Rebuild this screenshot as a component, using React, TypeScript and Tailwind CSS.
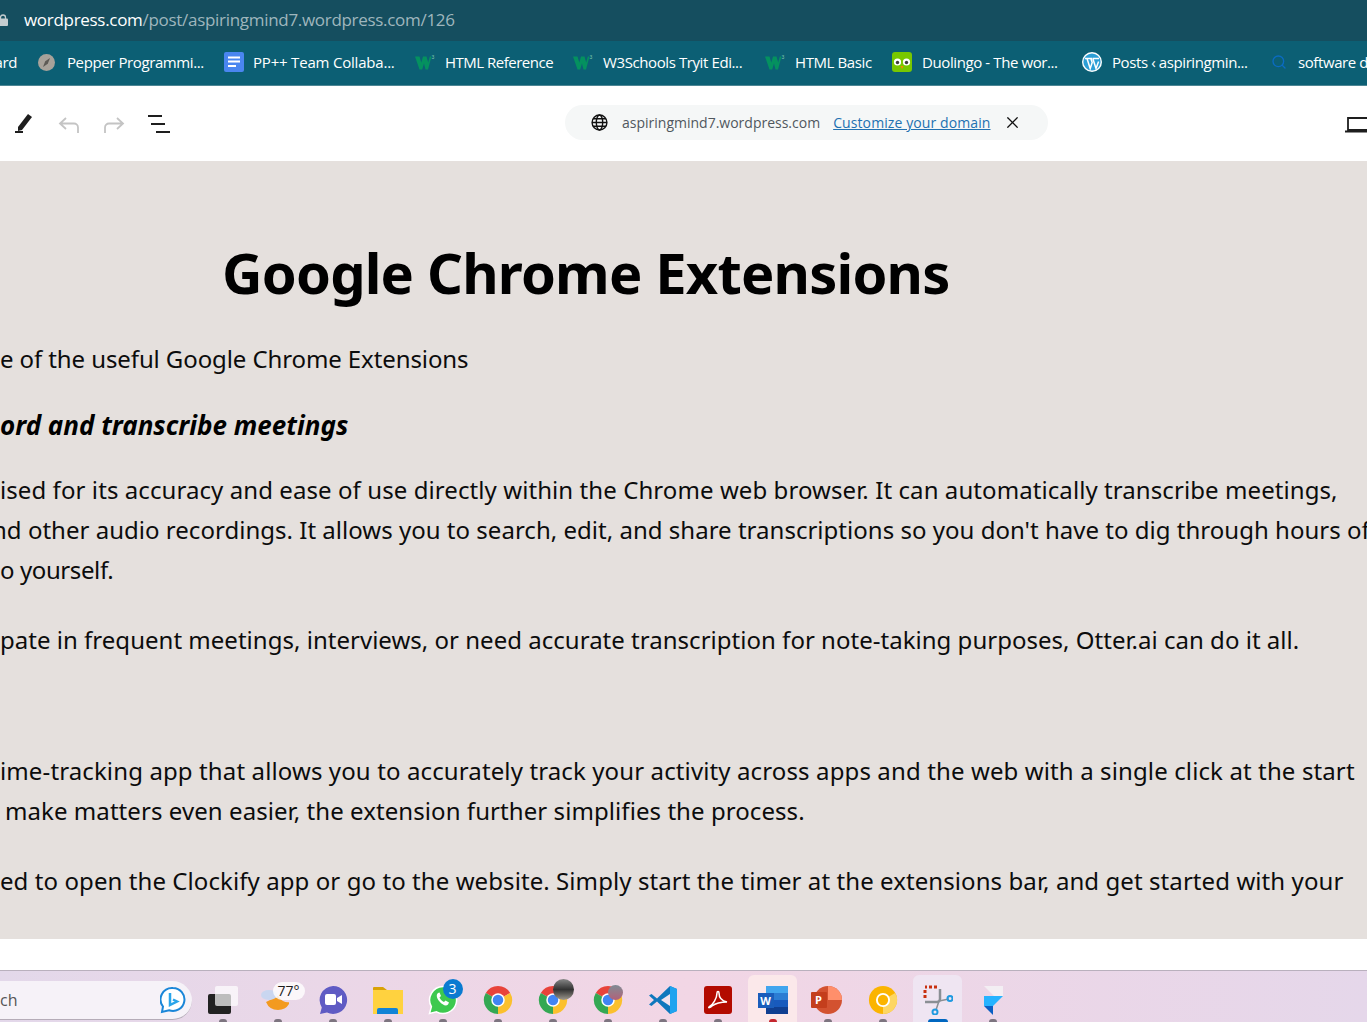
import { X, Search } from "lucide-react"

const uiFont = "font-['Open_Sans',sans-serif]"

const W3Icon = () => (
  <svg width="20" height="16" viewBox="0 0 20 16">
    <path d="M0 2.500h4.500l1.800 6 1.700-6h3.500l1.700 6 1.600-6h1.700L13 15.500h-2.500L9 9.500l-1.800 6H4.500z" fill="#04915f" />
    <text x="16.500" y="4.500" fontSize="5" fill="#7fc9ad" fontFamily="Liberation Sans">3</text>
  </svg>
)

const DocsIcon = () => (
  <svg width="20" height="20" viewBox="0 0 20 20">
    <rect width="20" height="20" rx="2" fill="#4a86f0" />
    <path d="M4 4.500h12v2H4zM4 8.500h12v2H4zM4 13h8v2H4z" fill="#fff" />
  </svg>
)

const CompassIcon = () => (
  <svg width="17" height="17" viewBox="0 0 17 17">
    <circle cx="8.500" cy="8.500" r="8.500" fill="#a8a29a" />
    <path d="M12 4 9.800 9.800 5 13l2.200-5.800z" fill="#5d5a55" />
  </svg>
)

const DuoIcon = () => (
  <svg width="20" height="20" viewBox="0 0 20 20">
    <rect width="20" height="20" rx="3" fill="#78c800" />
    <circle cx="5.500" cy="10" r="3.600" fill="#fff" />
    <circle cx="14.500" cy="10" r="3.600" fill="#fff" />
    <circle cx="5.500" cy="10.500" r="1.700" fill="#3c3c3c" />
    <circle cx="14.500" cy="10.500" r="1.700" fill="#3c3c3c" />
    <path d="M8.500 14h3L10 17z" fill="#f49000" />
  </svg>
)

const WpIcon = () => (
  <svg width="20" height="20" viewBox="0 0 20 20">
    <circle cx="10" cy="10" r="10" fill="#fff" />
    <circle cx="10" cy="10" r="8.600" fill="#2c9fd6" />
    <path d="M3 6.500h7M10.500 6.500h6.500M5 6.500l3.200 10 2-6-1.400-4M10.800 6.500l3.200 10 2.600-7" fill="none" stroke="#fff" strokeWidth="1.500" />
  </svg>
)

const bookmarks = [
  { icon: <CompassIcon />, label: "Pepper Programmi...", iconBox: "w-[17px] ml-[21px]", textBox: "ml-[12px] w-[136px]" },
  { icon: <DocsIcon />, label: "PP++ Team Collaba...", iconBox: "w-[20px] ml-[21px]", textBox: "ml-[9px] w-[142px] tracking-[-0.2px]" },
  { icon: <W3Icon />, label: "HTML Reference", iconBox: "w-[20px] ml-[20px]", textBox: "ml-[10px] w-[107px] tracking-[-0.5px]" },
  { icon: <W3Icon />, label: "W3Schools Tryit Edi...", iconBox: "w-[20px] ml-[21px]", textBox: "ml-[10px] w-[141px]" },
  { icon: <W3Icon />, label: "HTML Basic", iconBox: "w-[20px] ml-[21px]", textBox: "ml-[10px] w-[77px]" },
  { icon: <DuoIcon />, label: "Duolingo - The wor...", iconBox: "w-[20px] ml-[20px]", textBox: "ml-[10px] w-[140px]" },
  { icon: <WpIcon />, label: "Posts ‹ aspiringmin...", iconBox: "w-[20px] ml-[20px]", textBox: "ml-[10px] w-[137px]" },
  { icon: <Search size={16} className="text-[#0b6bc2]" />, label: "software d", iconBox: "w-[16px] ml-[22px]", textBox: "ml-[11px] w-[80px]" },
]

const ChromeIcon = ({ children }: { children?: React.ReactNode }) => (
  <div className="relative w-[30px] h-[30px]">
    <svg width="30" height="30" viewBox="0 0 32 32">
      <path d="M3 8.500A15 15 0 0 1 29 8.500L16 16Z" fill="#e8433a" />
      <path d="M29 8.500A15 15 0 0 1 16 31L16 16Z" fill="#fbc02d" />
      <path d="M16 31A15 15 0 0 1 3 8.500L16 16Z" fill="#34a853" />
      <circle cx="16" cy="16" r="7.200" fill="#fff" />
      <circle cx="16" cy="16" r="5.600" fill="#4285f4" />
    </svg>
    {children}
  </div>
)

const taskIcons = [
  {
    key: "taskview",
    node: (
      <div className="relative w-[30px] h-[28px]">
        <div className="absolute left-0 bottom-0 w-[23px] h-[20px] bg-[#222] rounded-[2px]" />
        <div className="absolute right-0 top-0 w-[23px] h-[20px] bg-white/70 rounded-[2px]" />
      </div>
    ),
  },
  {
    key: "weather",
    node: (
      <div className="relative w-[40px] h-[32px]">
        <svg width="28" height="30" viewBox="0 0 28 30" className="absolute left-[3px] top-[2px]">
          <path d="M7 18a13 13 0 0 0 24 0 11 11 0 0 1-12-6z" fill="#f39a1f" transform="translate(-2 -2)" />
          <ellipse cx="8" cy="9" rx="8" ry="5" fill="#c9d6f0" />
        </svg>
        <span className="absolute left-[15px] top-[-2px] px-[5px] rounded-full bg-white/80 text-[14px] leading-[18px] text-[#1c1c1c] font-['Open_Sans',sans-serif]">77°</span>
      </div>
    ),
  },
  {
    key: "meet",
    node: (
      <svg width="30" height="30" viewBox="0 0 30 30">
        <path d="M15 1a14 14 0 1 1-6 26.600L2 29l1.800-6.500A14 14 0 0 1 15 1z" fill="#5f5bc4" />
        <rect x="7" y="9" width="11" height="11" rx="2" fill="#fff" />
        <path d="m19 13 5-3v9l-5-3z" fill="#fff" />
      </svg>
    ),
  },
  {
    key: "folder",
    node: (
      <svg width="32" height="28" viewBox="0 0 32 28">
        <path d="M1 2a1 1 0 0 1 1-1h9l4 3h16v3H1z" fill="#d9a206" />
        <rect x="1" y="4" width="30" height="24" fill="#ffd23f" />
        <path d="M5 28v-4a2 2 0 0 1 2-2h17a2 2 0 0 1 2 2v4z" fill="#1183d6" />
      </svg>
    ),
  },
  {
    key: "whatsapp",
    node: (
      <div className="relative w-[30px] h-[30px]">
        <svg width="30" height="30" viewBox="0 0 30 30">
          <path d="M15 1.500a13.500 13.500 0 1 1-6.500 25.300L1.500 28.500l1.900-6.800A13.500 13.500 0 0 1 15 1.500z" fill="#3dc94f" stroke="#fff" strokeWidth="1.500" />
          <path d="M10 8c-2 1.500-1.500 5 1.500 8.500s6.500 5 8.500 3l1-2-3.500-2-1.500 1.500c-2-1-3.500-2.500-4.500-4.500l1.500-1.500-1.500-3.500z" fill="#fff" />
        </svg>
        <span className="absolute right-[-5px] top-[-6px] w-[20px] h-[20px] rounded-full bg-[#0a7bd1] text-white text-[14px] leading-[20px] text-center font-['Open_Sans',sans-serif]">3</span>
      </div>
    ),
  },
  { key: "chrome1", node: <ChromeIcon /> },
  {
    key: "chrome2",
    node: (
      <ChromeIcon>
        <div className="absolute right-[-6px] top-[-6px] w-[21px] h-[21px] rounded-full bg-gradient-to-b from-[#888] via-[#333] to-[#a09a90]" />
      </ChromeIcon>
    ),
  },
  {
    key: "chrome3",
    node: (
      <ChromeIcon>
        <div className="absolute right-0 top-0 w-[15px] h-[15px] rounded-full bg-gradient-to-b from-[#7d8a94] to-[#b0607a]" />
      </ChromeIcon>
    ),
  },
  {
    key: "vscode",
    node: (
      <svg width="30" height="30" viewBox="0 0 30 30">
        <path d="M22 1 29 4v22l-7 3L9 16.500 3.500 21 1 19.500 6 15 1 10.500 3.500 9 9 13.500z" fill="#0e78bd" />
        <path d="M22 1 29 4v22l-7 3z" fill="#1fa3ef" />
        <path d="M22 9 13 15l9 6z" fill="#f0e3ee" />
      </svg>
    ),
  },
  {
    key: "acrobat",
    node: (
      <svg width="28" height="28" viewBox="0 0 28 28">
        <rect width="28" height="28" rx="3" fill="#b30b00" />
        <path d="M5 21c4-2 8-9 8-14 0-2 2-2 2 0 0 5 3 8 8 9-5 0-11 1-15 4-2 2-4 2-3 1z" fill="none" stroke="#fff" strokeWidth="1.500" />
      </svg>
    ),
  },
  {
    key: "word",
    active: "bg-[#fbe8ea]",
    bar: "bg-[#c4262e] w-[8px]",
    node: (
      <div className="relative w-[30px] h-[28px]">
        <div className="absolute right-0 top-0 w-[22px] h-full flex flex-col">
          <div className="flex-1 bg-[#41a5ee]" />
          <div className="flex-1 bg-[#2b7cd3]" />
          <div className="flex-1 bg-[#185abd]" />
          <div className="flex-1 bg-[#103f91]" />
        </div>
        <div className="absolute left-0 top-[7px] w-[16px] h-[15px] bg-[#1a5dbb] text-white text-[11px] leading-[15px] text-center font-bold font-['Open_Sans',sans-serif]">W</div>
      </div>
    ),
  },
  {
    key: "ppt",
    node: (
      <div className="relative w-[30px] h-[30px]">
        <svg width="30" height="30" viewBox="0 0 30 30">
          <circle cx="15" cy="15" r="14" fill="#d35230" />
          <path d="M15 1a14 14 0 0 1 14 14H15z" fill="#ff8f6b" />
        </svg>
        <div className="absolute left-[-2px] top-[7px] w-[16px] h-[16px] bg-[#c43e1c] rounded-[1px] text-white text-[11px] leading-[16px] text-center font-bold font-['Open_Sans',sans-serif]">P</div>
      </div>
    ),
  },
  {
    key: "canary",
    node: (
      <svg width="30" height="30" viewBox="0 0 32 32">
        <circle cx="16" cy="16" r="15" fill="#fbb400" />
        <path d="M29 8.500A15 15 0 0 1 16 31L16 16Z" fill="#fdd663" />
        <circle cx="16" cy="16" r="7.500" fill="#fff" />
        <circle cx="16" cy="16" r="5.500" fill="#fbb400" />
      </svg>
    ),
  },
  {
    key: "snip",
    active: "bg-[#efe5f2]",
    bar: "bg-[#0067c0] w-[20px]",
    node: (
      <svg width="30" height="30" viewBox="0 0 30 30">
        <path d="M2 2h2M6 2h3M11 2h3M2 5v3M2 10v3" stroke="#c8300f" strokeWidth="3" fill="none" />
        <path d="M2 16h12a3 3 0 0 0 3-3V3" stroke="#8a8f94" strokeWidth="2.500" fill="none" transform="translate(0 1)" />
        <path d="M16 16 26 14M16 16l-3 9" stroke="#8a8f94" strokeWidth="1.500" />
        <circle cx="27" cy="13.500" r="2.500" fill="none" stroke="#1f9ae0" strokeWidth="2" />
        <circle cx="12" cy="27" r="2.500" fill="none" stroke="#1f9ae0" strokeWidth="2" />
      </svg>
    ),
  },
  {
    key: "framer",
    node: (
      <svg width="20" height="30" viewBox="0 0 20 30">
        <path d="M1 1h19v10H11z" fill="#f3eef3" />
        <path d="M11 11h9L10 21H1V11z" fill="#26b3ff" />
        <path d="M1 21h9v9z" fill="#0a5fc4" />
      </svg>
    ),
  },
]

const Line = ({ children, className = "" }: { children: React.ReactNode; className?: string }) => (
  <p className={`h-[40px] leading-[40px] text-[24px] text-[#0c0c0c] whitespace-nowrap ${className}`}>{children}</p>
)

export default function App() {
  return (
    <div className="w-[1367px] h-[1022px] overflow-hidden flex flex-col bg-white">
      {/* Address bar */}
      <div className={`h-[41px] pb-[2px] bg-[#154e5f] flex items-center ${uiFont} text-[17px] tracking-[-0.3px]`}>
        <svg width="10" height="12" viewBox="0 0 10 12" className="-ml-[2px] mr-[16px] shrink-0">
          <rect x="0" y="4.500" width="10" height="7.500" rx="1" fill="#c5cdd0" />
          <path d="M2.500 5V3.500a2.500 2.500 0 0 1 5 0V5" fill="none" stroke="#c5cdd0" strokeWidth="1.300" />
        </svg>
        <span className="text-white">wordpress.com</span>
        <span className="text-[#9fb6bd]">/post/aspiringmind7.wordpress.com/126</span>
      </div>

      {/* Bookmarks */}
      <div className={`h-[45px] pb-[2px] bg-[#0c5f74] border-b border-[#4d8694] flex items-center text-white text-[15px] tracking-[-0.4px] whitespace-nowrap ${uiFont}`}>
        <span className="w-[17px] shrink-0 overflow-hidden flex justify-end">ard</span>
        {bookmarks.map((b) => (
          <div key={b.label} className="flex items-center shrink-0">
            <div className={`flex justify-center shrink-0 ${b.iconBox}`}>{b.icon}</div>
            <span className={`shrink-0 ${b.textBox}`}>{b.label}</span>
          </div>
        ))}
      </div>

      {/* Editor toolbar */}
      <div className="h-[75px] flex items-center relative">
        <svg width="20" height="22" viewBox="0 0 20 22" className="ml-[15px] -mt-[1px] shrink-0">
          <path d="M3 15 13 2l4 3-10 13-4 1z" fill="#1e1e1e" />
          <rect x="0" y="19" width="8" height="2" fill="#1e1e1e" />
        </svg>
        <svg width="22" height="16" viewBox="0 0 22 16" className="ml-[23px] mt-[2px] shrink-0" fill="none" stroke="#c4c4c4" strokeWidth="1.800">
          <path d="M8 1 2 6.500 8 12M2 6.500h14a4 4 0 0 1 4 4V16" />
        </svg>
        <svg width="22" height="16" viewBox="0 0 22 16" className="ml-[23px] mt-[2px] shrink-0" fill="none" stroke="#c4c4c4" strokeWidth="1.800">
          <path d="m14 1 6 5.500L14 12M20 6.500H6a4 4 0 0 0-4 4V16" />
        </svg>
        <svg width="24" height="18" viewBox="0 0 24 18" className="ml-[23px] shrink-0" fill="#1e1e1e">
          <rect x="0" y="0" width="14" height="2" />
          <rect x="3" y="8" width="14" height="2" />
          <rect x="8" y="16" width="14" height="2" />
        </svg>

        <div className={`ml-[393px] -mt-[2px] w-[483px] shrink-0 h-[35px] rounded-full bg-[#f5f7f7] flex items-center text-[14px] ${uiFont}`}>
          <svg width="17" height="17" viewBox="0 0 16 16" className="ml-[26px]" fill="none" stroke="#111" strokeWidth="1.300">
            <circle cx="8" cy="8" r="7" />
            <ellipse cx="8" cy="8" rx="3" ry="7" />
            <path d="M1 8h14M2 4.500h12M2 11.500h12" />
          </svg>
          <span className="ml-[14px] text-[#50575e]">aspiringmind7.wordpress.com</span>
          <span className="ml-[13px] text-[#2271b1] underline tracking-[0.1px]">Customize your domain</span>
          <X size={19} strokeWidth={1.500} className="ml-[12px] text-[#111]" />
        </div>

        <svg width="24" height="16" viewBox="0 0 24 16" className="ml-[297px] mt-[2px] shrink-0" fill="none" stroke="#1e1e1e" strokeWidth="1.800">
          <path d="M3 1h20v12H3zM0 14.500h24" />
        </svg>
      </div>

      {/* Post content */}
      <div className="h-[778px] bg-[#e5e0dd] overflow-hidden font-['Noto_Sans',sans-serif]">
        <h1 className="pl-[222px] pt-[81px] mb-[37px] leading-[60px] text-[56px] font-bold text-black whitespace-nowrap tracking-[-0.8px]">
          Google Chrome Extensions
        </h1>
        <Line className="tracking-[-0.1px]">e of the useful Google Chrome Extensions</Line>
        <Line className="mt-[26px] !text-[26px] font-bold italic !text-black">ord and transcribe meetings</Line>
        <Line className="mt-[25px] tracking-[0.08px]">ised for its accuracy and ease of use directly within the Chrome web browser. It can automatically transcribe meetings,</Line>
        <Line className="-ml-[8px] tracking-[0.02px]">nd other audio recordings. It allows you to search, edit, and share transcriptions so you don't have to dig through hours of</Line>
        <Line className="tracking-[-0.4px]">o yourself.</Line>
        <Line className="mt-[30px] tracking-[0.02px]">pate in frequent meetings, interviews, or need accurate transcription for note-taking purposes, Otter.ai can do it all.</Line>
        <Line className="mt-[91px] tracking-[0.12px]">ime-tracking app that allows you to accurately track your activity across apps and the web with a single click at the start</Line>
        <Line className="pl-[5px] tracking-[0.07px]">make matters even easier, the extension further simplifies the process.</Line>
        <Line className="mt-[30px] tracking-[0.08px]">ed to open the Clockify app or go to the website. Simply start the timer at the extensions bar, and get started with your</Line>
      </div>

      <div className="h-[31px] bg-white" />

      {/* Taskbar */}
      <div className="h-[52px] border-t border-[#b9b0bd] bg-gradient-to-r from-[#e3d8ea] via-[#f2d6e5] to-[#e5d7ea] flex">
        <div className={`mt-[10px] w-[192px] h-[39px] rounded-r-full bg-[#f6f2f8] border-b border-[#b5acb8] flex items-center justify-between pr-[6px] shrink-0 ${uiFont}`}>
          <span className="text-[16px] text-[#555]">ch</span>
          <svg width="26" height="28" viewBox="0 0 26 28" fill="none">
            <path d="M13 2a11.500 11.500 0 1 1-4 22.300L2 26l1-5.500A11.500 11.500 0 0 1 13 2z" stroke="#1a86d8" strokeWidth="2" fill="#fff" />
            <path d="M10 7v12l7-3.500-4-2" stroke="#2aa5ea" strokeWidth="2.500" />
          </svg>
        </div>
        <div className="flex ml-[3px]">
          {taskIcons.map((t) => (
            <div key={t.key} className="w-[55px] h-full relative flex justify-center">
              {t.active && <div className={`absolute left-[3px] right-[3px] top-[4px] bottom-0 rounded-t-[6px] ${t.active}`} />}
              <div className="relative mt-[14px] h-[30px] flex items-center">{t.node}</div>
              <div className={`absolute bottom-0 h-[3px] rounded-t-full ${t.bar ?? "bg-[#7d7580] w-[8px]"}`} />
            </div>
          ))}
        </div>
      </div>
    </div>
  )
}
